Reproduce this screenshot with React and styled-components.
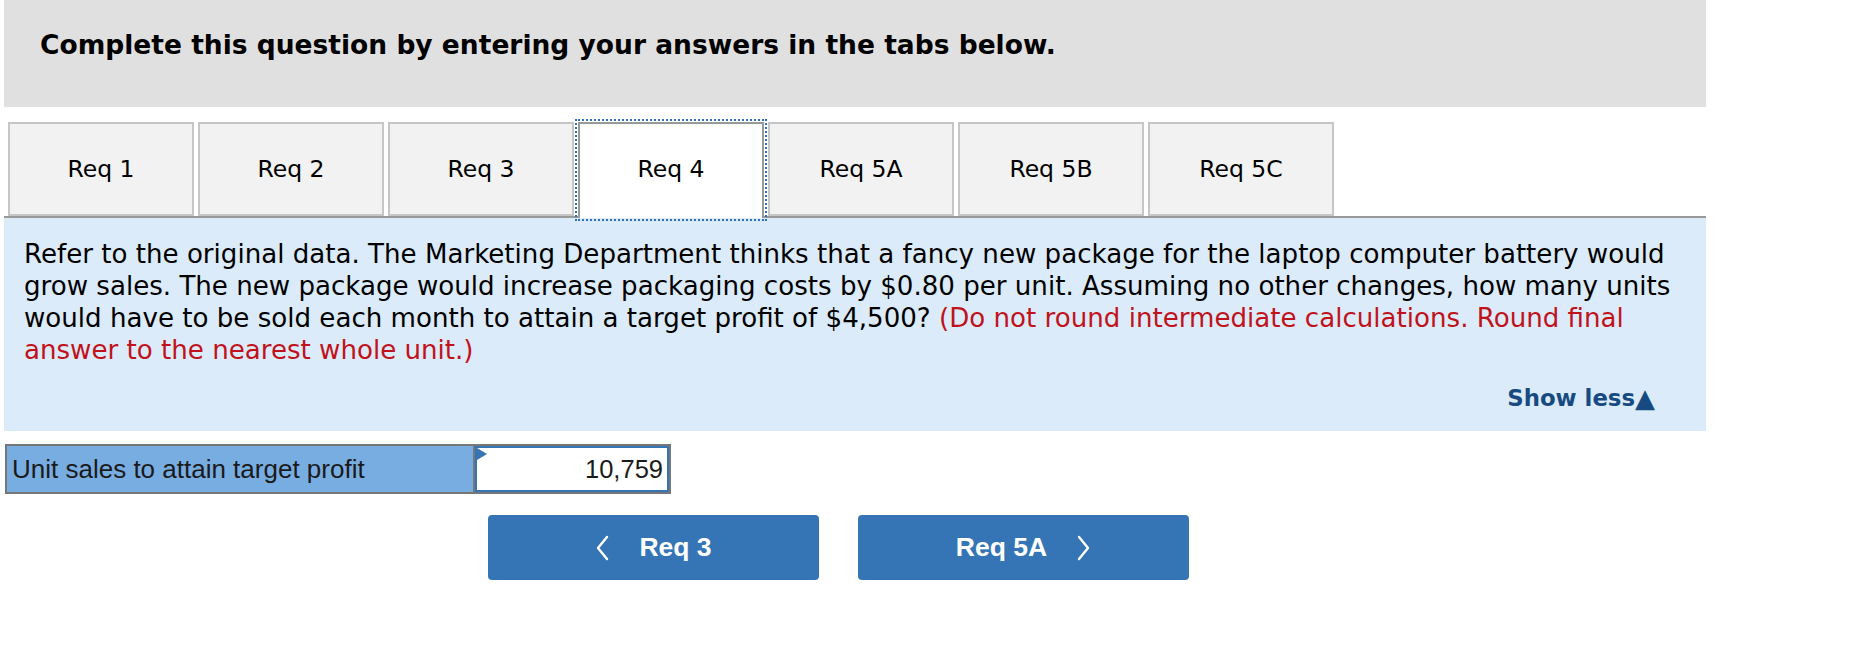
import React from "react";
import styled, { createGlobalStyle } from "styled-components";

const Global = createGlobalStyle`
  html, body { margin: 0; padding: 0; background: #fff; }
  body { font-family: "DejaVu Sans", Verdana, sans-serif; color: #000; }
`;

const Page = styled.div`
  width: 1702px;
  padding: 0 0 0 4px;
`;

const Header = styled.div`
  height: 107px;
  background: #e0e0e0;
  box-sizing: border-box;
  padding: 30px 0 0 36px;
`;

const Title = styled.h1`
  margin: 0;
  font-family: "DejaVu Sans", Verdana, sans-serif;
  font-weight: bold;
  font-size: 26.5px;
  line-height: 30px;
  white-space: nowrap;
`;

const TabRow = styled.div`
  display: flex;
  gap: 4px;
  margin-top: 15px;
  padding-left: 4px;
  height: 94px;
  border-bottom: 2px solid #999;
`;

const Tab = styled.button`
  width: 186px;
  height: ${(p) => (p.$active ? "96px" : "94px")};
  box-sizing: border-box;
  border: 2px solid ${(p) => (p.$active ? "#999" : "#c6c6c6")};
  border-bottom: ${(p) => (p.$active ? "none" : "2px solid #c6c6c6")};
  background: ${(p) => (p.$active ? "#fff" : "#f2f2f2")};
  outline: ${(p) => (p.$active ? "2px dotted #2f6fc0" : "none")};
  outline-offset: 1px;
  font-family: "DejaVu Sans", Verdana, sans-serif;
  font-size: 23.5px;
  color: #000;
  padding: ${(p) => (p.$active ? "0 0 4px 0" : "0")};
  margin: 0;
  position: relative;
  z-index: ${(p) => (p.$active ? 1 : 0)};
`;

const Panel = styled.div`
  background: #dbebf9;
  height: 213px;
  box-sizing: border-box;
  padding: 20px 20px 0 20px;
  display: flex;
  flex-direction: column;
`;

const Question = styled.p`
  margin: 0;
  font-family: "DejaVu Sans", Verdana, sans-serif;
  font-size: 26.1px;
  line-height: 32px;
  color: #000;
  white-space: nowrap;
`;

const Note = styled.span`
  color: #c1121c;
`;

const ShowLess = styled.div`
  margin-top: auto;
  margin-bottom: 20px;
  align-self: flex-end;
  margin-right: 31px;
  font-family: "DejaVu Sans", Verdana, sans-serif;
  font-weight: bold;
  font-size: 22.8px;
  color: #174a80;
  display: flex;
  align-items: center;
`;

const Tri = styled.span`
  font-size: 26px;
  line-height: 1;
  margin-left: 0;
`;

const AnswerRow = styled.div`
  margin-top: 13px;
  margin-left: 1px;
  display: flex;
  width: 666px;
  height: 50px;
  box-sizing: border-box;
  border: 2px solid #777;
`;

const Label = styled.div`
  width: 468px;
  background: #78ade2;
  border-right: 2px solid #777;
  display: flex;
  align-items: center;
  padding-left: 5px;
  box-sizing: border-box;
  font-family: "Liberation Sans", Arial, sans-serif;
  font-size: 26px;
  color: #1a1a1a;
  white-space: nowrap;
`;

const InputCell = styled.div`
  flex: 1;
  position: relative;
  border: 2px solid #3575b5;
  background: #fff;
  display: flex;
  align-items: center;
  justify-content: flex-end;
  padding-right: 4px;
  font-family: "Liberation Sans", Arial, sans-serif;
  font-size: 25.5px;
  color: #1a1a1a;
`;

const Corner = styled.span`
  position: absolute;
  left: 0;
  top: 0;
  width: 0;
  height: 0;
  border-top: 6px solid transparent;
  border-bottom: 6px solid transparent;
  border-left: 10px solid #3575b5;
`;

const NavRow = styled.div`
  display: flex;
  gap: 39px;
  margin-top: 21px;
  padding-left: 484px;
`;

const NavButton = styled.button`
  width: 331px;
  height: 65px;
  border: none;
  border-radius: 4px;
  background: #3575b5;
  color: #fff;
  display: flex;
  align-items: center;
  justify-content: center;
  gap: 30px;
  font-family: "Liberation Sans", Arial, sans-serif;
  font-weight: bold;
  font-size: 26.5px;
  padding: 0;
`;

const Chevron = ({ dir }) => (
  <svg width="14" height="26" viewBox="0 0 14 26">
    <polyline
      points={dir === "left" ? "12,2 3,13 12,24" : "2,2 11,13 2,24"}
      fill="none"
      stroke="#fff"
      strokeWidth="2.4"
      strokeLinecap="round"
      strokeLinejoin="round"
    />
  </svg>
);

const tabs = ["Req 1", "Req 2", "Req 3", "Req 4", "Req 5A", "Req 5B", "Req 5C"];

export default function App() {
  return (
    <Page>
      <Global />
      <Header>
        <Title>Complete this question by entering your answers in the tabs below.</Title>
      </Header>
      <TabRow>
        {tabs.map((t) => (
          <Tab key={t} $active={t === "Req 4"}>
            {t}
          </Tab>
        ))}
      </TabRow>
      <Panel>
        <Question>
          Refer to the original data. The Marketing Department thinks that a fancy new package for the laptop computer battery would
          <br />
          grow sales. The new package would increase packaging costs by $0.80 per unit. Assuming no other changes, how many units
          <br />
          would have to be sold each month to attain a target profit of $4,500?{" "}
          <Note>
            (Do not round intermediate calculations. Round final
            <br />
            answer to the nearest whole unit.)
          </Note>
        </Question>
        <ShowLess>
          Show less<Tri>▲</Tri>
        </ShowLess>
      </Panel>
      <AnswerRow>
        <Label>Unit sales to attain target profit</Label>
        <InputCell>
          <Corner />
          10,759
        </InputCell>
      </AnswerRow>
      <NavRow>
        <NavButton>
          <Chevron dir="left" />
          Req 3
        </NavButton>
        <NavButton>
          Req 5A
          <Chevron dir="right" />
        </NavButton>
      </NavRow>
    </Page>
  );
}
